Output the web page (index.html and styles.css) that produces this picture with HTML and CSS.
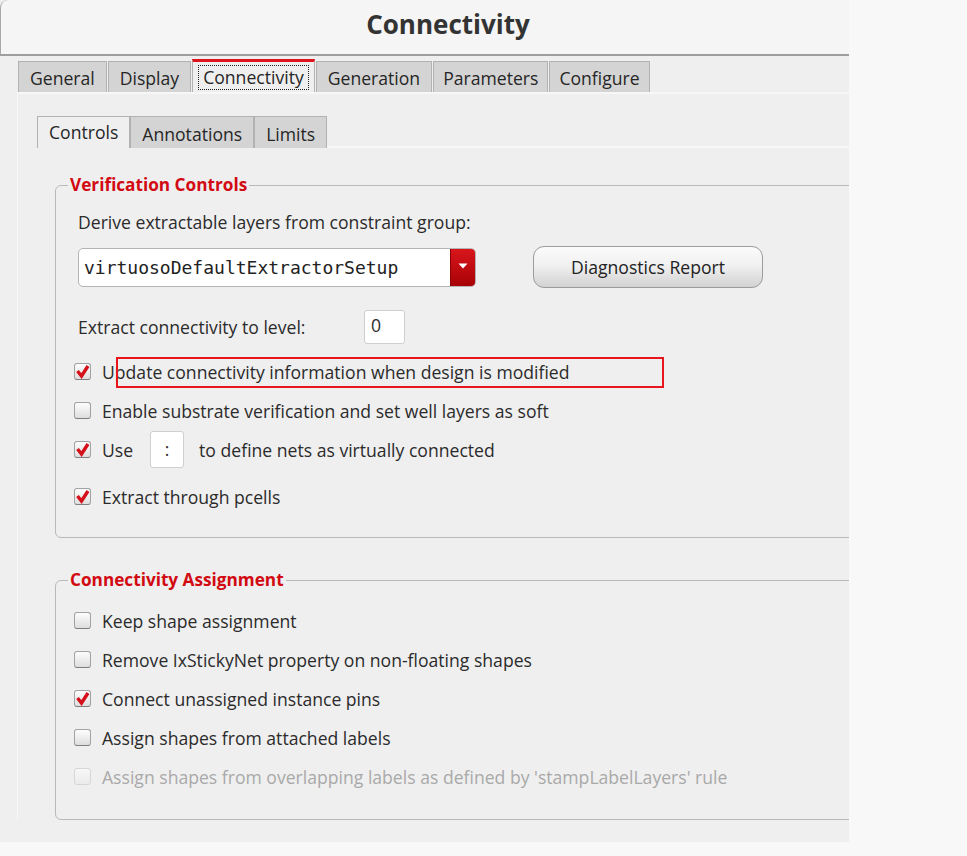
FILE: index.html
```html
<!DOCTYPE html>
<html>
<head>
<meta charset="utf-8">
<link rel="stylesheet" href="styles.css">
</head>
<body>
<div class="window">
  <header class="titlebar"><h1 class="title">Connectivity</h1></header>
  <nav class="tabs main-tabs">
    <div class="tab">General</div>
    <div class="tab">Display</div>
    <div class="tab active"><span class="focus">Connectivity</span></div>
    <div class="tab">Generation</div>
    <div class="tab">Parameters</div>
    <div class="tab">Configure</div>
  </nav>
  <div class="pane">
    <nav class="tabs sub-tabs">
      <div class="tab active">Controls</div>
      <div class="tab">Annotations</div>
      <div class="tab">Limits</div>
    </nav>
    <div class="subpane">
      <fieldset class="group">
        <legend>Verification Controls</legend>
        <div class="group-body">
          <div class="label-row">Derive extractable layers from constraint group:</div>
          <div class="select-row">
            <div class="select">
              <span class="select-value">virtuosoDefaultExtractorSetup</span>
              <span class="select-btn"><svg width="10" height="6" viewBox="0 0 10 6"><path d="M0.5 0.5 L9.5 0.5 L5 5.5 Z" fill="#fff"/></svg></span>
            </div>
            <div class="button">Diagnostics Report</div>
          </div>
          <div class="level-row">
            <span class="level-label">Extract connectivity to level:</span>
            <span class="input level-input">0</span>
          </div>
          <div class="check-row first">
            <span class="cb checked"><svg width="17" height="17" viewBox="0 0 17 17"><path d="M3.5 8 L7.5 13 L14 3" fill="none" stroke="#d4101a" stroke-width="3.4"/></svg></span>
            <span class="cb-label">Update connectivity information when design is modified</span>
            <span class="highlight"></span>
          </div>
          <div class="check-row">
            <span class="cb"></span>
            <span class="cb-label">Enable substrate verification and set well layers as soft</span>
          </div>
          <div class="check-row">
            <span class="cb checked"><svg width="17" height="17" viewBox="0 0 17 17"><path d="M3.5 8 L7.5 13 L14 3" fill="none" stroke="#d4101a" stroke-width="3.4"/></svg></span>
            <span class="cb-label">Use</span>
            <span class="input use-input">:</span>
            <span class="cb-label after">to define nets as virtually connected</span>
          </div>
          <div class="check-row spaced">
            <span class="cb checked"><svg width="17" height="17" viewBox="0 0 17 17"><path d="M3.5 8 L7.5 13 L14 3" fill="none" stroke="#d4101a" stroke-width="3.4"/></svg></span>
            <span class="cb-label">Extract through pcells</span>
          </div>
        </div>
      </fieldset>

      <fieldset class="group second">
        <legend>Connectivity Assignment</legend>
        <div class="group-body body2">
          <div class="check-row">
            <span class="cb"></span>
            <span class="cb-label">Keep shape assignment</span>
          </div>
          <div class="check-row">
            <span class="cb"></span>
            <span class="cb-label">Remove IxStickyNet property on non-floating shapes</span>
          </div>
          <div class="check-row">
            <span class="cb checked"><svg width="17" height="17" viewBox="0 0 17 17"><path d="M3.5 8 L7.5 13 L14 3" fill="none" stroke="#d4101a" stroke-width="3.4"/></svg></span>
            <span class="cb-label">Connect unassigned instance pins</span>
          </div>
          <div class="check-row">
            <span class="cb"></span>
            <span class="cb-label">Assign shapes from attached labels</span>
          </div>
          <div class="check-row disabled">
            <span class="cb"></span>
            <span class="cb-label">Assign shapes from overlapping labels as defined by 'stampLabelLayers' rule</span>
          </div>
        </div>
      </fieldset>
    </div>
  </div>
</div>
</body>
</html>
```

FILE: styles.css
```css
* { box-sizing: border-box; }

html, body {
  margin: 0;
  background: #f8f8f8;
}

body {
  font-family: "Open Sans", "Noto Sans", sans-serif;
  font-size: 17.6px;
  color: #2b2b2b;
}

.window {
  width: 849px;
  height: 842px;
  overflow: hidden;
  background: #efefef;
}

.titlebar {
  height: 56px;
  background: #f5f5f5;
  border-left: 1px solid #a8a8a8;
  border-top-left-radius: 8px;
  border-bottom: 2px solid #9e9e9e;
  padding-left: 46px;
}

.title {
  margin: 0;
  font-size: 26px;
  font-weight: 700;
  line-height: 48px;
  text-align: center;
  color: #333;
}

.tabs {
  display: flex;
  align-items: flex-end;
}

.main-tabs {
  padding: 3px 0 0 18px;
  gap: 1px;
}

.tab {
  height: 31px;
  padding: 2px 11px 0;
  line-height: 29px;
  background: #d4d4d4;
  border: 1px solid #b2b2b2;
  border-bottom: none;
  color: #262626;
  white-space: nowrap;
}

.main-tabs .tab:nth-child(5),
.main-tabs .tab:nth-child(6) {
  padding: 2px 9px 0;
}

.main-tabs .tab.active {
  height: 33px;
  border-top: 3px solid #e0141c;
  background: #efefef;
  padding: 3px 5px 0;
  line-height: 23px;
}

.focus {
  display: inline-block;
  border: 1px dotted #222;
  padding: 0 4px;
  line-height: 23px;
}

.pane {
  margin-left: 17px;
  border-top: 2px solid #f7f7f7;
  border-left: 1px solid #f7f7f7;
  padding: 22px 0 0 19px;
}

.sub-tabs .tab {
  height: 32px;
  padding-top: 3px;
  line-height: 28px;
}

.sub-tabs .tab.active {
  background: #efefef;
  padding: 1px 11px 0;
}

.subpane {
  border-top: 2px solid #f8f8f8;
  margin-top: -2px;
  padding: 26px 0 0 18px;
}

.group {
  margin: 0;
  padding: 0;
  width: 900px;
  border: 1px solid #b9b9b9;
  border-radius: 6px;
}

.group.second {
  margin-top: 31px;
}

.group legend {
  margin-left: 12px;
  padding: 0 2px;
  font-size: 17.2px;
  font-weight: 700;
  line-height: 22px;
  color: #d20a12;
}

.group-body {
  padding: 11px 0 21px 22px;
}

.body2 {
  padding-top: 10px;
  padding-bottom: 23px;
}

.label-row {
  line-height: 30px;
}

.select-row {
  margin-top: 9px;
  display: flex;
  align-items: center;
  gap: 57px;
}

.select {
  width: 398px;
  height: 39px;
  display: flex;
  background: #fff;
  border: 1px solid #b4b4b4;
  border-radius: 5px;
  overflow: hidden;
}

.select-value {
  flex: 1;
  padding-left: 5px;
  font-family: "DejaVu Sans Mono", monospace;
  font-size: 18px;
  line-height: 37px;
  color: #222;
}

.select-btn {
  width: 25px;
  display: flex;
  align-items: center;
  justify-content: center;
  padding-bottom: 2px;
  background: linear-gradient(#d8161c, #a80206);
  border-left: 1px solid #8a0004;
}

.button {
  width: 230px;
  height: 42px;
  border: 1px solid #9c9c9c;
  border-radius: 11px;
  background: linear-gradient(#fbfbfb 0%, #f1f1f1 45%, #d2d2d2 100%);
  text-align: center;
  line-height: 40px;
  color: #222;
}

.level-row {
  margin-top: 22px;
  height: 34px;
  display: flex;
  align-items: center;
}

.level-label {
  width: 286px;
}

.input {
  display: inline-block;
  background: #fff;
  border: 1px solid #cfcfcf;
  border-radius: 3px;
}

.level-input {
  width: 41px;
  height: 34px;
  padding: 1px 0 0 6px;
  line-height: 26px;
}

.use-input {
  width: 34px;
  height: 37px;
  margin: 0 15px 0 17px;
  text-align: center;
  line-height: 35px;
}

.check-row {
  position: relative;
  height: 39px;
  margin-left: -4px;
  display: flex;
  align-items: center;
}

.check-row.first {
  margin-top: 8px;
}

.check-row.spaced {
  margin-top: 8px;
}

.cb {
  width: 17px;
  height: 17px;
  flex: none;
  margin-right: 11px;
  border: 1px solid #a2a2a2;
  border-bottom-color: #7e7e7e;
  border-radius: 3px;
  background: linear-gradient(#fdfdfd, #dedede);
  display: flex;
}

.cb svg {
  margin: -1px;
}

.disabled .cb {
  border-color: #d6d6d6;
  background: linear-gradient(#f7f7f7, #ebebeb);
}

.disabled .cb-label {
  color: #a9a9a9;
}

.highlight {
  position: absolute;
  left: 42px;
  top: 5px;
  width: 548px;
  height: 31px;
  border: 2px solid #e8151d;
}
```
